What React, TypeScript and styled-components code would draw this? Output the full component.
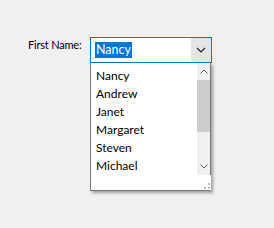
import React from "react";
import styled, { createGlobalStyle } from "styled-components";

const names = ["Nancy", "Andrew", "Janet", "Margaret", "Steven", "Michael"];

const App = () => {
    return (
        <>
            <GlobalStyle />
            <Page>
                <Label>First Name:</Label>
                <Field>
                    <Combo>
                        <TextPart>
                            <Selected>Nancy</Selected>
                        </TextPart>
                        <DropButton>
                            <svg width="10" height="6" viewBox="0 0 10 6">
                                <path d="M1 1 L5 5 L9 1" fill="none" stroke="#1e1e1e" strokeWidth="1.2" />
                            </svg>
                        </DropButton>
                    </Combo>
                    <ListBox>
                        <Items>
                            {names.map((n) => (
                                <Item key={n}>{n}</Item>
                            ))}
                        </Items>
                        <ScrollBar>
                            <Arrow>
                                <svg width="8" height="5" viewBox="0 0 8 5">
                                    <path d="M0.5 4.5 L4 1 L7.5 4.5" fill="none" stroke="#606060" strokeWidth="1" />
                                </svg>
                            </Arrow>
                            <Thumb />
                            <Track />
                            <Arrow>
                                <svg width="8" height="5" viewBox="0 0 8 5">
                                    <path d="M0.5 0.5 L4 4 L7.5 0.5" fill="none" stroke="#606060" strokeWidth="1" />
                                </svg>
                            </Arrow>
                            <Grip>
                                <svg width="8" height="8" viewBox="0 0 8 8">
                                    <rect x="5" y="1" width="2" height="2" fill="#bcbcbc" />
                                    <rect x="1" y="5" width="2" height="2" fill="#bcbcbc" />
                                    <rect x="5" y="5" width="2" height="2" fill="#bcbcbc" />
                                </svg>
                            </Grip>
                        </ScrollBar>
                    </ListBox>
                </Field>
            </Page>
        </>
    );
};

const GlobalStyle = createGlobalStyle`
  body {
    margin: 0;
    background: #f0f0f0;
    font-family: Lato, "Liberation Sans", sans-serif;
    font-size: 12px;
    color: #000;
  }
`;

const Page = styled.div`
  display: flex;
  align-items: flex-start;
  padding: 37px 0 0 28px;
  height: 228px;
  box-sizing: border-box;
`;

const Label = styled.div`
  width: 62px;
  line-height: 15px;
  font-size: 11px;
  letter-spacing: -0.2px;
`;

const Field = styled.div`
  display: flex;
  flex-direction: column;
`;

const Combo = styled.div`
  display: flex;
  width: 122px;
  height: 26px;
  box-sizing: border-box;
  border: 1px solid #0078d7;
  background: #fff;
`;

const TextPart = styled.div`
  flex: 1;
  display: flex;
  align-items: center;
  padding-left: 4px;
`;

const Selected = styled.span`
  background: #0078d7;
  color: #fff;
  font-size: 12.5px;
  line-height: 16px;
  padding: 0 1px;
`;

const DropButton = styled.div`
  width: 20px;
  background: #e5e5e5;
  display: flex;
  align-items: center;
  justify-content: center;
`;

const ListBox = styled.div`
  display: flex;
  width: 121px;
  height: 128px;
  box-sizing: border-box;
  border: 1px solid #7a7a7a;
  border-top: none;
  background: #fff;
  box-shadow: 2px 2px 3px rgba(0, 0, 0, 0.35);
`;

const Items = styled.div`
  flex: 1;
  padding-top: 4px;
`;

const Item = styled.div`
  height: 18px;
  line-height: 18px;
  padding-left: 5px;
  font-size: 12px;
`;

const ScrollBar = styled.div`
  width: 13px;
  display: flex;
  flex-direction: column;
  background: #f0f0f0;
`;

const Arrow = styled.div`
  height: 17px;
  display: flex;
  align-items: center;
  justify-content: center;
`;

const Thumb = styled.div`
  height: 52px;
  background: #cdcdcd;
`;

const Track = styled.div`
  flex: 1;
`;

const Grip = styled.div`
  height: 15px;
  background: #fff;
  display: flex;
  align-items: flex-end;
  justify-content: flex-end;
  margin-right: -1px;
`;

export default App;
